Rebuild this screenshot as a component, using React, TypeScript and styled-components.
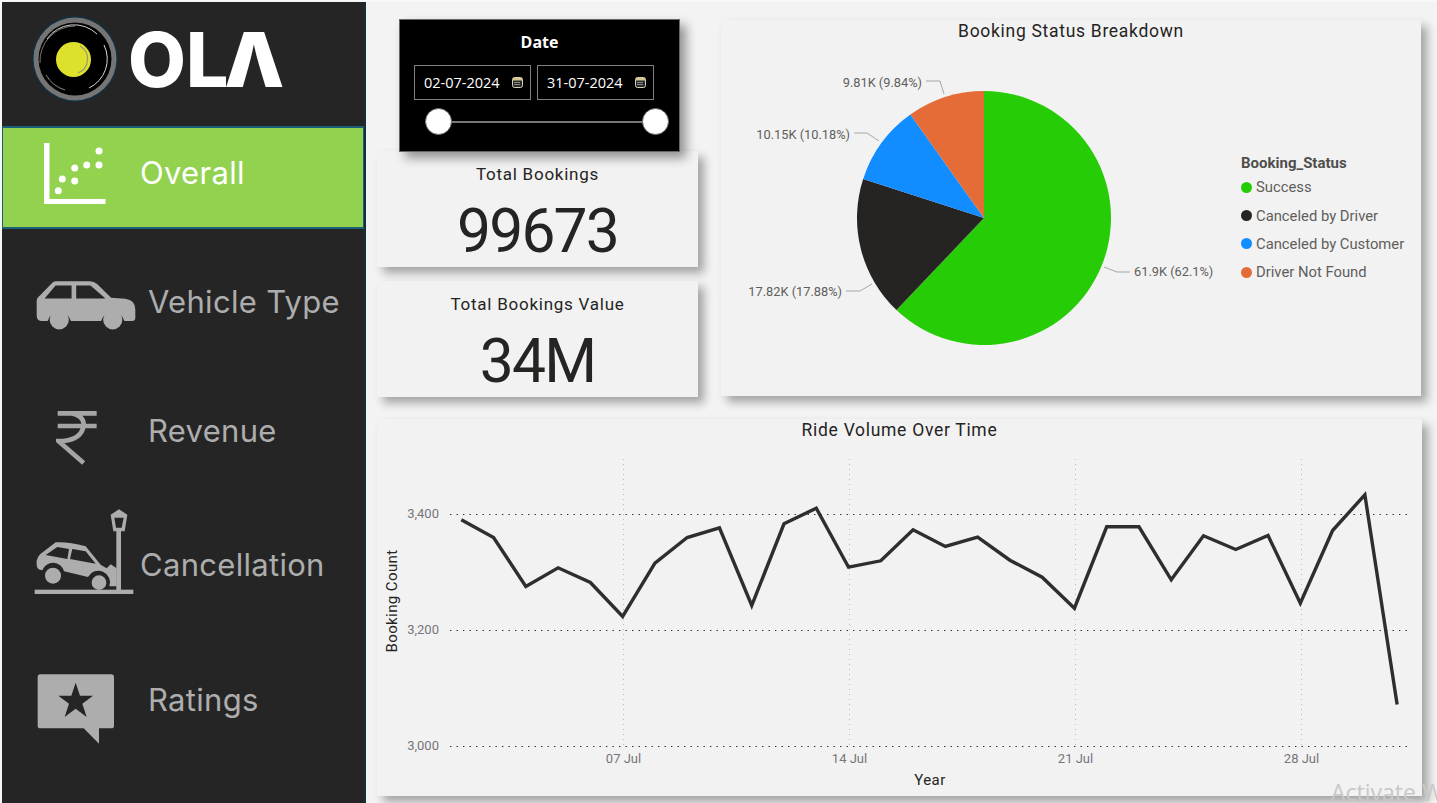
import React from 'react';
import styled, { createGlobalStyle } from 'styled-components';

const COLORS = {
    sidebar: '#252525',
    active: '#92d24f',
    muted: '#adadad',
    card: '#f2f2f2',
    ink: '#252423',
    label: '#605e5c'
};

const DIN = '"Roboto", "Liberation Sans", sans-serif';

const SLICES = [
    { name: 'Success', pct: 62.1, color: '#26cd06' },
    { name: 'Canceled by Driver', pct: 17.88, color: '#252423' },
    { name: 'Canceled by Customer', pct: 10.18, color: '#118dff' },
    { name: 'Driver Not Found', pct: 9.84, color: '#e66c37' }
];

const PIE_LABELS = [
    { text: '9.81K (9.84%)', x: 922, y: 87, anchor: 'end', line: '926,81 940,81 944,94' },
    { text: '10.15K (10.18%)', x: 850, y: 139, anchor: 'end', line: '854,133 867,133 879,141' },
    { text: '17.82K (17.88%)', x: 842, y: 296, anchor: 'end', line: '846,291 860,291 872,284' },
    { text: '61.9K (62.1%)', x: 1134, y: 276, anchor: 'start', line: '1104,267 1117,272 1130,272' }
];

// y of each day in the plot, 2 Jul to 31 Jul
const RIDE_Y = [
    518.8, 536.5, 585.5, 566.8, 581.5, 615.5, 562.2, 536.5, 526.8, 604.5, 522.8, 507.2,
    566.2, 559.8, 528.8, 545.5, 536.2, 559.2, 576.2, 607.2, 525.8, 525.8, 578.8,
    534.8, 548.5, 534.5, 602.2, 529.5, 493.8, 703.5
];

const Y_TICKS = [
    { label: '3,400', y: 513.5 },
    { label: '3,200', y: 629.5 },
    { label: '3,000', y: 745.5 }
];

const X_TICKS = [
    { label: '07 Jul', x: 623.5 },
    { label: '14 Jul', x: 849.5 },
    { label: '21 Jul', x: 1075.5 },
    { label: '28 Jul', x: 1301.5 }
];

const CX = 984;
const CY = 218;
const R = 127;

const polar = (pct: number) => {
    const a = (pct / 100) * Math.PI * 2;
    return [CX + R * Math.sin(a), CY - R * Math.cos(a)];
};

const slicePath = (from: number, to: number) => {
    const [x1, y1] = polar(from);
    const [x2, y2] = polar(to);
    const large = to - from > 50 ? 1 : 0;
    return `M${CX} ${CY}L${x1} ${y1}A${R} ${R} 0 ${large} 1 ${x2} ${y2}Z`;
};

const LogoMark = () => (
    <svg width="88" height="88" viewBox="0 0 88 88">
        <circle cx="44" cy="44" r="43" fill="#12303f" />
        <circle cx="44" cy="44" r="41.5" fill="#757575" />
        <circle cx="44" cy="44" r="36.5" fill="#000" />
        <path d="M9 48A35 35 0 0 1 44 11" fill="none" stroke="#777" strokeWidth="1" />
        <path d="M16 24A33 33 0 0 1 66 19" fill="none" stroke="#cfcfcf" strokeWidth="1" />
        <path d="M73 30A32 32 0 0 1 58 73" fill="none" stroke="#d8d8d8" strokeWidth="1" />
        <path d="M15 60A33 33 0 0 0 34 75" fill="none" stroke="#8a8a8a" strokeWidth="1" />
        <circle cx="42.5" cy="44.5" r="17.5" fill="#dde12b" />
        <path d="M49 31A15 15 0 0 1 47 58" fill="none" stroke="#9a9a7a" strokeWidth="1.2" />
    </svg>
);

const OverallIcon = () => (
    <svg width="62" height="62" viewBox="44 143 62 62" fill="#fff">
        <rect x="44" y="143" width="5.5" height="61" />
        <rect x="44" y="199" width="61.5" height="5" />
        <circle cx="99" cy="151" r="3.5" />
        <circle cx="99" cy="165" r="3.5" />
        <circle cx="86.7" cy="165" r="3.5" />
        <circle cx="74.7" cy="168" r="3.5" />
        <circle cx="74.7" cy="181" r="3.5" />
        <circle cx="62.3" cy="179" r="3.5" />
        <circle cx="58.3" cy="190.7" r="3.5" />
    </svg>
);

const CarIcon = () => (
    <svg width="100" height="51" viewBox="106 62 301 152">
        <path
            fill={COLORS.muted}
            d="M165 65H268Q280 65 290 73L332 115L375 118Q405 122 405 150V175Q405 185 395 185H372A36 36 0 0 0 302 185H211A36 36 0 0 0 141 185H125Q108 185 108 168V125Q108 115 118 108L150 75Q158 65 165 65Z"
        />
        <path fill={COLORS.sidebar} d="M132 117L165 78H213V117ZM227 78H270L315 117H227Z" />
        <circle cx="176" cy="181" r="29" fill={COLORS.muted} />
        <circle cx="337" cy="181" r="29" fill={COLORS.muted} />
    </svg>
);

const RupeeIcon = () => (
    <svg width="42" height="56" viewBox="165 448 126 166">
        <path
            fill="none"
            stroke="#a5a5a5"
            strokeWidth="14"
            d="M170 457H287M170 495H287M212 457Q250 465 248 495Q240 536 185 540H172L248 606"
        />
    </svg>
);

const CrashIcon = () => (
    <svg width="100" height="86" viewBox="100 58 300 258">
        <rect x="102" y="300" width="296" height="13" fill={COLORS.muted} />
        <rect x="347" y="120" width="14" height="182" fill={COLORS.muted} />
        <path fill={COLORS.muted} d="M330 75L355 59L380 75L372 125H338Z" />
        <path fill={COLORS.sidebar} d="M341 84H369L363 114H346Z" />
        <path
            fill={COLORS.muted}
            d="M108 225Q105 200 130 185L165 158Q200 155 255 170L300 225L318 236L330 224L348 236V290H326A35 35 0 0 0 262 262L190 245A34 34 0 0 0 125 242Q108 240 108 225Z"
        />
        <path fill={COLORS.sidebar} d="M135 196L170 172L205 178L200 208ZM215 178L255 185L285 222L208 208Z" />
        <circle cx="157" cy="258" r="24" fill={COLORS.muted} />
        <circle cx="295" cy="279" r="22" fill={COLORS.muted} />
    </svg>
);

const RatingIcon = () => (
    <svg width="78" height="72" viewBox="110 550 234 214">
        <path
            fill={COLORS.muted}
            d="M120 553H333Q341 553 341 561V707Q341 715 333 715H296V761L250 715H120Q112 715 112 707V561Q112 553 120 553Z"
        />
        <polygon
            fill={COLORS.sidebar}
            points="226,578 239,617 278,617 246,641 259,681 226,656 193,681 206,641 174,617 213,617"
        />
    </svg>
);

const CalendarIcon = () => (
    <svg width="11" height="11" viewBox="0 0 11 11">
        <rect x="0.5" y="0.5" width="10" height="10" rx="2" fill="#2a2a2a" stroke="#d8d2b8" />
        <rect x="1" y="1" width="9" height="2.5" fill="#d8c98a" />
        <path d="M2.5 5.5H8.5M2.5 7.5H8.5" stroke="#e8e8e8" strokeDasharray="1 1" />
    </svg>
);

const App: React.FC = () => {
    let acc = 0;
    const linePoints = RIDE_Y.map((y, i) => `${461.3 + i * 32.27},${y}`).join(' ');

    return (
        <>
            <GlobalStyle />
            <Page>
                <Sidebar>
                    <LogoRow>
                        <LogoMark />
                        <Wordmark>
                            OL<Lambda>Λ</Lambda>
                        </Wordmark>
                    </LogoRow>
                    <NavItem $active $height={103} $left={41}>
                        <IconSlot $width={96} $shift={-8}>
                            <OverallIcon />
                        </IconSlot>
                        <NavLabel $active $shift={-10}>Overall</NavLabel>
                    </NavItem>
                    <NavList>
                        <NavItem $height={130} $left={34}>
                            <IconSlot $width={112} $shift={4}>
                                <CarIcon />
                            </IconSlot>
                            <NavLabel $shift={-4}>Vehicle Type</NavLabel>
                        </NavItem>
                        <NavItem $height={130} $left={54}>
                            <IconSlot $width={92} $shift={10}>
                                <RupeeIcon />
                            </IconSlot>
                            <NavLabel $shift={-6}>Revenue</NavLabel>
                        </NavItem>
                        <NavItem $height={132} $left={32}>
                            <IconSlot $width={106} $shift={-24}>
                                <CrashIcon />
                            </IconSlot>
                            <NavLabel $shift={0}>Cancellation</NavLabel>
                        </NavItem>
                        <NavItem $height={140} $left={35}>
                            <IconSlot $width={111} $shift={18}>
                                <RatingIcon />
                            </IconSlot>
                            <NavLabel $shift={-2}>Ratings</NavLabel>
                        </NavItem>
                    </NavList>
                </Sidebar>

                <Main>
                    <TopRow>
                        <LeftColumn>
                            <Slicer>
                                <SlicerTitle>Date</SlicerTitle>
                                <DateRow>
                                    <DateBox>
                                        02-07-2024
                                        <CalendarIcon />
                                    </DateBox>
                                    <DateBox>
                                        31-07-2024
                                        <CalendarIcon />
                                    </DateBox>
                                </DateRow>
                                <Track>
                                    <Handle />
                                    <Handle />
                                </Track>
                            </Slicer>
                            <KpiCard>
                                <KpiTitle>Total Bookings</KpiTitle>
                                <KpiValue>99673</KpiValue>
                            </KpiCard>
                            <KpiCard>
                                <KpiTitle>Total Bookings Value</KpiTitle>
                                <KpiValue>34M</KpiValue>
                            </KpiCard>
                        </LeftColumn>

                        <PieCard>
                            <ChartTitle>Booking Status Breakdown</ChartTitle>
                            <PieBody>
                                <svg width="500" height="352" viewBox="721 44 500 352">
                                    {SLICES.map((s) => {
                                        const d = slicePath(acc, acc + s.pct);
                                        acc += s.pct;
                                        return <path key={s.name} d={d} fill={s.color} />;
                                    })}
                                    {PIE_LABELS.map((l) => (
                                        <g key={l.text}>
                                            <polyline points={l.line} fill="none" stroke="#a6a6a6" />
                                            <PieLabel x={l.x} y={l.y} textAnchor={l.anchor}>
                                                {l.text}
                                            </PieLabel>
                                        </g>
                                    ))}
                                </svg>
                                <Legend>
                                    <LegendTitle>Booking_Status</LegendTitle>
                                    {SLICES.map((s) => (
                                        <LegendItem key={s.name}>
                                            <LegendDot $color={s.color} />
                                            {s.name}
                                        </LegendItem>
                                    ))}
                                </Legend>
                            </PieBody>
                        </PieCard>
                    </TopRow>

                    <LineCard>
                        <ChartTitle>Ride Volume Over Time</ChartTitle>
                        <svg width="1045" height="353" viewBox="377 442 1045 353">
                            {X_TICKS.map((t) => (
                                <g key={t.label}>
                                    <line x1={t.x} x2={t.x} y1="458" y2="746" stroke="#bdbdbd" strokeDasharray="1 4" />
                                    <AxisLabel x={t.x} y="762" textAnchor="middle">
                                        {t.label}
                                    </AxisLabel>
                                </g>
                            ))}
                            {Y_TICKS.map((t) => (
                                <g key={t.label}>
                                    <line x1="450" x2="1407" y1={t.y} y2={t.y} stroke="#2c2c2c" strokeDasharray="1.4 5.1" />
                                    <AxisLabel x="439" y={t.y + 3.5} textAnchor="end">
                                        {t.label}
                                    </AxisLabel>
                                </g>
                            ))}
                            <polyline points={linePoints} fill="none" stroke="#2e2e2e" strokeWidth="3.4" />
                            <AxisTitle x="930" y="784" textAnchor="middle">
                                Year
                            </AxisTitle>
                            <AxisTitle x="397" y="600" textAnchor="middle" transform="rotate(-90 397 600)">
                                Booking Count
                            </AxisTitle>
                        </svg>
                    </LineCard>
                </Main>
                <Watermark>Activate Windows</Watermark>
            </Page>
        </>
    );
};

export default App;

const GlobalStyle = createGlobalStyle`
    html, body {
        margin: 0;
        padding: 0;
    }
    body {
        font-family: ${DIN};
    }
`;

const Page = styled.div`
    position: relative;
    display: flex;
    width: 1437px;
    height: 803px;
    padding: 2px 0 0 2px;
    box-sizing: border-box;
    overflow: hidden;
    background: #f7f8f8;
`;

const Sidebar = styled.nav`
    flex: none;
    display: flex;
    flex-direction: column;
    width: 362px;
    background: ${COLORS.sidebar};
    border-right: 2px solid #14303d;
    box-sizing: content-box;
`;

const LogoRow = styled.div`
    display: flex;
    align-items: center;
    gap: 9px;
    height: 124px;
    padding: 0 0 10px 29px;
    box-sizing: border-box;
`;

const Wordmark = styled.div`
    font-family: Inter, 'Liberation Sans', sans-serif;
    font-weight: 800;
    font-size: 75px;
    line-height: 1;
    color: #fff;
`;

const Lambda = styled.span`
    margin-left: -4px;
    font-weight: 900;
`;

const NavList = styled.div`
    display: flex;
    flex-direction: column;
    margin-top: 9px;
`;

const NavItem = styled.div<{ $active?: boolean; $height: number; $left: number }>`
    display: flex;
    align-items: center;
    height: ${({ $height }) => $height}px;
    padding-left: ${({ $left }) => $left}px;
    box-sizing: border-box;
    background: ${({ $active }) => ($active ? COLORS.active : 'transparent')};
    border-style: solid;
    border-color: #1a6079;
    border-width: ${({ $active }) => ($active ? '2px 1px' : '0')};
`;

const IconSlot = styled.div<{ $width: number; $shift: number }>`
    flex: none;
    display: flex;
    width: ${({ $width }) => $width}px;
    margin-top: ${({ $shift }) => $shift}px;
`;

const NavLabel = styled.span<{ $active?: boolean; $shift: number }>`
    font-family: Inter, 'Open Sans', sans-serif;
    font-size: 31px;
    letter-spacing: 0.3px;
    font-weight: 400;
    margin-top: ${({ $shift }) => $shift}px;
    color: ${({ $active }) => ($active ? '#fff' : COLORS.muted)};
`;

const Main = styled.main`
    display: flex;
    flex-direction: column;
    flex: 1;
    padding: 17px 0 0 11px;
    background: #f3f3f3;
`;

const TopRow = styled.div`
    display: flex;
    gap: 23px;
`;

const LeftColumn = styled.div`
    display: flex;
    flex-direction: column;
    gap: 14px;
    width: 321px;
`;

const Slicer = styled.section`
    position: relative;
    z-index: 1;
    display: flex;
    flex-direction: column;
    width: 281px;
    height: 133px;
    margin: 0 0 -15px 22px;
    padding: 13px 14px 0;
    box-sizing: border-box;
    background: #000;
    border: 1px solid #666;
    box-shadow: 6px 6px 10px rgba(0, 0, 0, 0.4);
`;

const SlicerTitle = styled.h3`
    margin: 0;
    font-family: 'Open Sans', sans-serif;
    font-size: 16px;
    line-height: 18px;
    font-weight: 700;
    text-align: center;
    color: #fff;
`;

const DateRow = styled.div`
    display: flex;
    gap: 6px;
    margin-top: 14px;
`;

const DateBox = styled.div`
    display: flex;
    align-items: center;
    justify-content: space-between;
    width: 117px;
    height: 35px;
    padding: 0 7px 0 9px;
    box-sizing: border-box;
    border: 1px solid #808080;
    font-family: 'Open Sans', sans-serif;
    font-size: 14.5px;
    color: #fff;
`;

const Track = styled.div`
    display: flex;
    justify-content: space-between;
    align-items: center;
    width: 244px;
    margin: 8px 0 0 11px;
    background: linear-gradient(#777, #777) center / 100% 2px no-repeat;
`;

const Handle = styled.span`
    width: 27px;
    height: 27px;
    border-radius: 50%;
    background: #fff;
    border: 1.5px solid #666;
    box-sizing: border-box;
`;

const KpiCard = styled.section`
    display: flex;
    flex-direction: column;
    align-items: center;
    height: 116px;
    background: ${COLORS.card};
    box-shadow: 6px 6px 9px rgba(0, 0, 0, 0.33);
`;

const KpiTitle = styled.div`
    margin-top: 12px;
    font-size: 17px;
    line-height: 22px;
    letter-spacing: 0.75px;
    color: ${COLORS.ink};
`;

const KpiValue = styled.div`
    margin-top: 16px;
    font-size: 60.5px;
    font-weight: 400;
    line-height: 62px;
    letter-spacing: -1.8px;
    color: ${COLORS.ink};
`;

const PieCard = styled.section`
    display: flex;
    flex-direction: column;
    width: 700px;
    height: 376px;
    margin-top: 1px;
    background: ${COLORS.card};
    box-shadow: 6px 6px 9px rgba(0, 0, 0, 0.33);
`;

const ChartTitle = styled.h2`
    flex: none;
    height: 24px;
    margin: 0;
    font-size: 17.5px;
    line-height: 22px;
    font-weight: 400;
    letter-spacing: 0.7px;
    text-align: center;
    color: ${COLORS.ink};
`;

const PieBody = styled.div`
    display: flex;
    gap: 20px;
`;

const Legend = styled.div`
    display: flex;
    flex-direction: column;
    padding-top: 109px;
`;

const LegendTitle = styled.div`
    height: 20px;
    margin-bottom: 4px;
    font-size: 15px;
    line-height: 20px;
    font-weight: 700;
    color: #4f4e4c;
`;

const LegendItem = styled.div`
    display: flex;
    align-items: center;
    gap: 4px;
    height: 28.4px;
    margin-top: -4px;
    margin-bottom: 4px;
    font-size: 14.8px;
    color: ${COLORS.label};
`;

const LegendDot = styled.span<{ $color: string }>`
    width: 11px;
    height: 11px;
    border-radius: 50%;
    background: ${({ $color }) => $color};
`;

const PieLabel = styled.text`
    font-size: 12.8px;
    fill: ${COLORS.label};
`;

const LineCard = styled.section`
    display: flex;
    flex-direction: column;
    width: 1045px;
    height: 377px;
    margin-top: 22px;
    background: ${COLORS.card};
    box-shadow: 6px 6px 9px rgba(0, 0, 0, 0.33);
`;

const AxisLabel = styled.text`
    font-size: 13px;
    fill: #77757a;
`;

const AxisTitle = styled.text`
    font-size: 15px;
    letter-spacing: 0.4px;
    fill: ${COLORS.ink};
`;

const Watermark = styled.div`
    position: absolute;
    left: 1331px;
    top: 776px;
    font-family: 'Open Sans', sans-serif;
    font-size: 23px;
    white-space: nowrap;
    color: #c8c8c8;
`;
